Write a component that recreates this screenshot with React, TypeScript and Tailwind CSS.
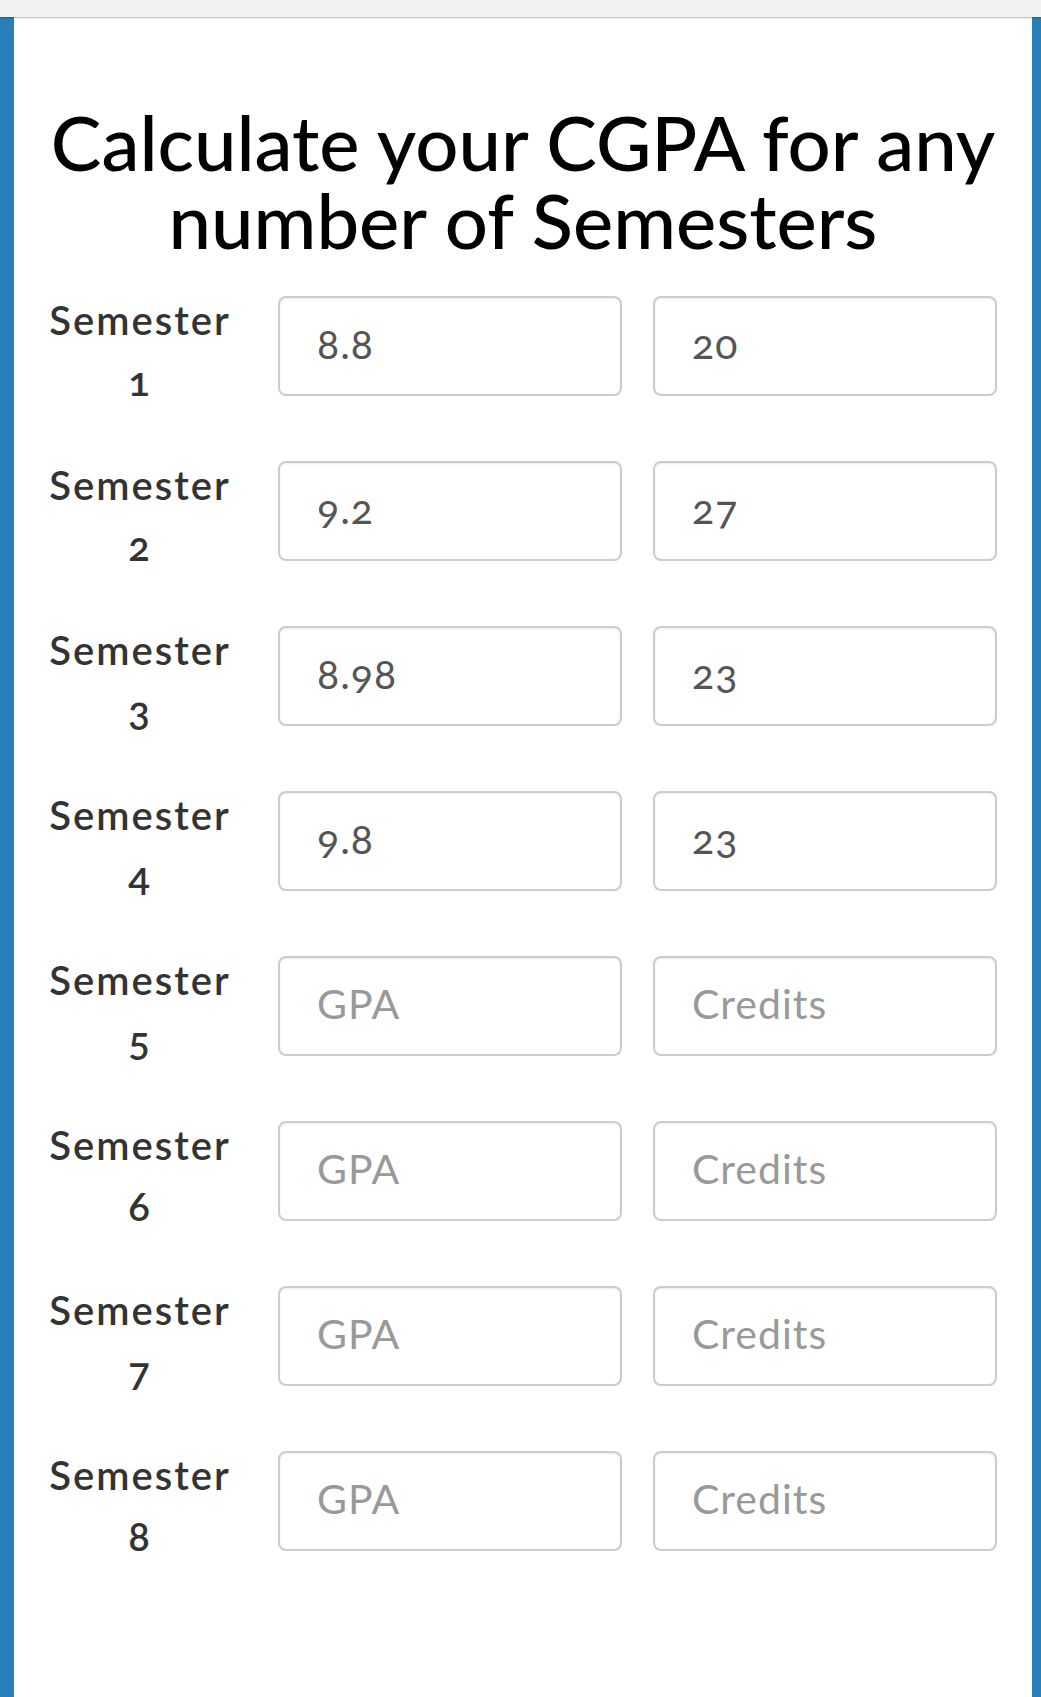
import React from 'react';

type Sem = { gpa: string; credits: string };

const semesters: Sem[] = [
  { gpa: '8.8', credits: '20' },
  { gpa: '9.2', credits: '27' },
  { gpa: '8.98', credits: '23' },
  { gpa: '9.8', credits: '23' },
  { gpa: '', credits: '' },
  { gpa: '', credits: '' },
  { gpa: '', credits: '' },
  { gpa: '', credits: '' },
];

const inputCls =
  'h-[100px] w-[344px] rounded-[8px] border-2 border-[#cccccc] bg-white px-[37px] pb-[6px] text-[41px] tracking-[1px] text-[#555] oldstyle-nums outline-none shadow-[inset_0_1px_2px_rgba(0,0,0,0.08)] placeholder:text-[#999]';

export default function App() {
  return (
    <div className="min-h-[1697px] flex flex-col bg-white font-['Lato','Noto_Sans',sans-serif]">
      {/* browser top strip */}
      <div className="h-[17px] bg-[#f2f2f2] shadow-[0_1px_2px_rgba(0,0,0,0.3)] relative z-10" />

      <main className="flex-1 border-l-[14px] border-r-[9px] border-[#2980b9] pt-[86px] pb-[140px]">
        <h1 className="text-center text-[76px] leading-[78px] font-medium text-black">
          Calculate your CGPA for any
          <br />
          number of Semesters
        </h1>

        <div className="mt-[37px] flex flex-col gap-[65px]">
          {semesters.map((s, i) => (
            <div key={i} className="flex h-[100px] items-start">
              <div className="w-[252px] -mt-[6px] text-center text-[40px] leading-[61px] font-semibold tracking-[2px] text-[#333] oldstyle-nums">
                Semester
                <br />
                {i + 1}
              </div>
              <div className="ml-[12px] flex gap-[31px]">
                <input className={inputCls} defaultValue={s.gpa} placeholder="GPA" />
                <input className={inputCls} defaultValue={s.credits} placeholder="Credits" />
              </div>
            </div>
          ))}
        </div>
      </main>
    </div>
  );
}
